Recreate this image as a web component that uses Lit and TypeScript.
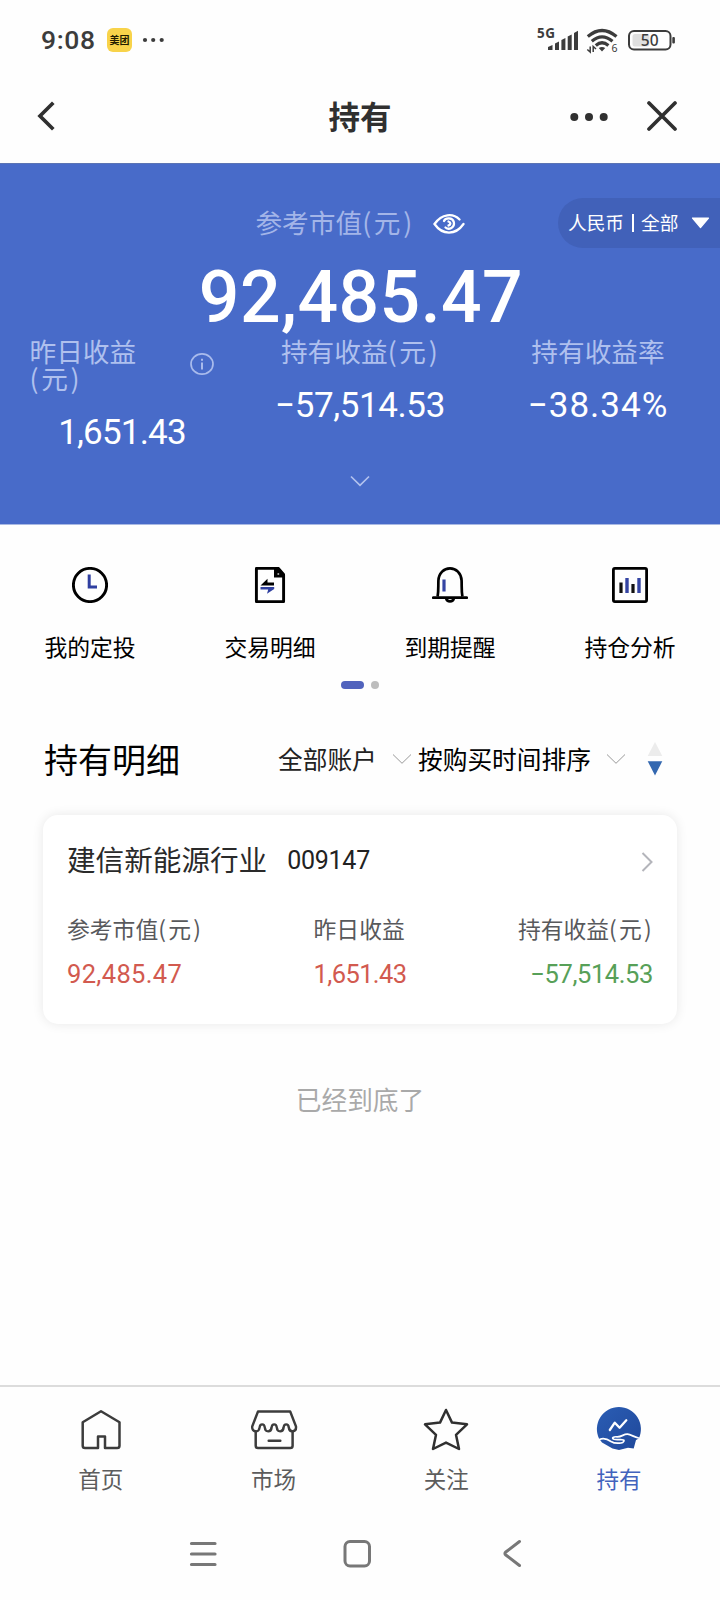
import { LitElement, html, css, svg } from "lit";
import { customElement } from "lit/decorators.js";

const icons = {
  clock: svg`<circle cx="18" cy="18" r="16.6" fill="none" stroke="#000" stroke-width="2.9"/><path d="M17.2 7.5V20H25" fill="none" stroke="#2f3fa0" stroke-width="3"/>`,
  doc: svg`<path d="M5 1.4H23.4L28.6 7.4V34.6H1.4V1.4Z" transform="translate(3 0)" fill="none" stroke="#000" stroke-width="2.9" stroke-linejoin="round"/><path d="M22 1.500V10.500H32.500V8L26 1.500Z" fill="#000"/><circle cx="26.300" cy="7" r="1" fill="#aaa"/><path d="M8.500 18.500L15.500 11.700V15.600H22V18.500Z" fill="#000"/><path d="M22.200 19.900H8.500V22.600H16.200L15 26.800L22.200 22Z" fill="#2f3fa0"/>`,
  bell: svg`<path d="M5.600 29.500C6.600 24 6.200 20 6.400 13.500C6.800 6 12 1.400 18 1.400S29.200 6 29.600 13.500C29.800 20 29.400 24 30.400 29.500" fill="none" stroke="#000" stroke-width="2.700"/><path d="M1.300 30.700H34.700" stroke="#000" stroke-width="2.700" stroke-linecap="round"/><path d="M14.200 31.500A3.900 3.700 0 0 0 21.800 31.500" fill="none" stroke="#000" stroke-width="2.800"/><path d="M12 12.500V24.500" stroke="#3545a3" stroke-width="3.200"/>`,
  chart: svg`<rect x="1.400" y="1.400" width="33.200" height="33.200" rx="1.500" fill="none" stroke="#000" stroke-width="2.800"/><path d="M9 15.500V26M21 17V26" stroke="#111" stroke-width="3.200"/><path d="M15 11V26M27 11V26" stroke="#3545a3" stroke-width="3.400"/>`,
  home: svg`<path d="M21 43H8Q5.700 43 5.700 40.700V17.200L24 6.200L42.500 17.200V40.700Q42.500 43 40.200 43H28V31.500H21Z" fill="none" stroke="#3c3c3c" stroke-width="2.500" stroke-linejoin="round"/>`,
  market: svg`<path d="M8 6.500H40.200L46 21.500C46.600 27.500 39.500 28 38.800 22.500C38.300 18.300 34 18.300 33.600 22.500C33 27.600 27.300 27.600 26.800 22.500C26.300 18.300 22 18.300 21.600 22.500C21 27.600 15.300 27.600 14.800 22.500C14.300 18.300 10 18.300 9.600 22.500C9 28 1.500 27.500 2.200 21.500Z" fill="none" stroke="#3c3c3c" stroke-width="2.400" stroke-linejoin="round"/><path d="M5.700 26.500V40.700Q5.700 43 8 43H40.300Q42.600 43 42.600 40.700V26.500M18.700 35.700H30.300" fill="none" stroke="#3c3c3c" stroke-width="2.500" stroke-linecap="round"/>`,
  star: svg`<path d="M24 5L30 17.600L45 19.300L34 29.800L37 44L24 37.600L11 44L14 29.800L3 19.300L18 17.600Z" fill="none" stroke="#303030" stroke-width="2.500" stroke-linejoin="round"/>`,
  hold: svg`<defs><linearGradient id="g" x1="0" x2="1" y1="0" y2="1"><stop offset="0" stop-color="#2a5db4"/><stop offset="1" stop-color="#20489a"/></linearGradient></defs><path d="M4 33.500A22 22 0 1 1 43.800 33.500L41 35L38.700 43.500L33 42.800L24 45L17.500 43.500L7 37.500Z" fill="url(#g)"/><path d="M4.500 34.500C8 33 12 33.800 16 36.500C20 39 29.500 38.800 29 35.500C28.500 33.500 22 35.500 19 34.300C16 33 18.500 31.500 22 31.800C27 32 28.500 28.900 32.500 29.200C36 29.500 38.500 31.800 43.500 33" fill="none" stroke="#fff" stroke-width="1.700" stroke-linecap="round"/><path d="M14.800 25L19.800 17.700L24.600 22.700L31.300 15.300" fill="none" stroke="#fff" stroke-width="2.300" stroke-linecap="round" stroke-linejoin="round"/>`,
};

const chevron = (cls: string, stroke: string, width: number) => html`<svg class=${cls} width="20" height="12" viewBox="0 0 20 12"><path d="M1 1.500L10 10.300L19 1.500" fill="none" stroke=${stroke} stroke-width=${width}/></svg>`;

const yuan = html`<span class="yuan">(元)</span>`;

@customElement("app-root")
export class AppRoot extends LitElement {
  static styles = css`
    :host { display: block; width: 720px; height: 1600px; background: #fefefe; font-family: "Noto Sans CJK SC", sans-serif; overflow: hidden; color: #000; }
    * { box-sizing: border-box; }
    svg { display: block; flex: none; }
    .page { display: flex; flex-direction: column; height: 1600px; white-space: nowrap; }
    .num { font-family: Roboto, "Noto Sans CJK SC", sans-serif; }
    .yuan { letter-spacing: .1em; margin-right: -.05em; }
    .status { height: 80px; display: flex; align-items: center; padding: 0 45px 0 41px; color: #3c3c3c; }
    .time { font: 500 26.500px/30px Roboto, sans-serif; letter-spacing: .6px; width: 66px; }
    .badge { width: 25px; height: 24px; border-radius: 6px; background: #f8d34a; color: #221c00; font-size: 10px; font-weight: 700; line-height: 24px; text-align: center; }
    .more { margin-left: 10px; }
    .signals { margin-left: auto; display: flex; align-items: center; }
    .nav { height: 83px; display: grid; grid-template-columns: 1fr auto 1fr; align-items: center; padding: 0 43px 11px 37px; }
    .title { font-size: 31.500px; font-weight: 700; line-height: 44px; color: #303030; padding: 0 0 2px 6px; }
    .actions { justify-self: end; display: flex; align-items: center; gap: 39px; }
    .hero { height: 362px; background: #486bc9; border-top: 1px solid #5b74b4; border-bottom: 1px solid #a9b9e3; color: #fff; display: flex; flex-direction: column; }
    .top { margin-top: 34px; height: 50px; display: grid; grid-template-columns: 1fr auto 1fr; align-items: center; }
    .worth { grid-column: 2; display: flex; align-items: center; gap: 19px; color: #a3b5e8; font-size: 26.700px; line-height: 44px; }
    .worth > span { padding-bottom: 2px; }
    .worth svg { margin-top: 2px; }
    .pill { justify-self: end; width: 162px; height: 50px; border-radius: 25px 0 0 25px; background: #4161b9; display: flex; align-items: center; padding-left: 10px; font-size: 18.700px; }
    .pill span { padding-bottom: 3px; }
    .sep { width: 2px; height: 18px; background: #fff; margin: 0 7.500px; }
    .tri { margin-left: 13px; }
    .total { margin-top: 9px; height: 81px; line-height: 81px; font-size: 71.500px; font-weight: 500; text-align: center; letter-spacing: .45px; padding-left: 2px; }
    .metrics { display: grid; grid-template-columns: 185px 292px 184px; padding: 0 29px 0 29px; height: 120px; }
    .metric { display: flex; flex-direction: column; align-items: center; }
    .mlabel { font-size: 26.700px; line-height: 27px; color: #afc0ee; display: flex; align-items: center; margin-top: -1px; }
    .mlabel.split { width: 184px; justify-content: space-between; }
    .mlabel.split > span { display: flex; flex-direction: column; }
    .mval { margin-top: 19px; font-size: 35px; line-height: 46px; }
    .m1 { letter-spacing: -.8px; padding-left: 1px; }
    .m2 { letter-spacing: -.4px; }
    .m3 { letter-spacing: 1px; }
    .fold { margin: 17px auto 0; }
    .quick { display: grid; grid-template-columns: repeat(4, 180px); margin-top: auto; padding-top: 42px; }
    .hero + .quick { margin-top: 0; }
    .qitem { display: flex; flex-direction: column; align-items: center; gap: 27px; font-size: 22.800px; line-height: 34px; }
    .dots { display: flex; justify-content: center; gap: 7px; margin-top: 17px; height: 8px; }
    .dots i { width: 8px; height: 8px; border-radius: 4px; background: #bdbdbd; }
    .dots i.on { width: 23px; background: #5163bd; }
    .head { margin-top: 40px; height: 60px; display: flex; align-items: center; padding-left: 44px; font-size: 24.700px; }
    .head span { padding-bottom: 3px; }
    .h { font-size: 34px; line-height: 50px; width: 234px; }
    .head .h { padding-bottom: 1px; }
    .acct { color: #222; width: 114px; }
    .sort { margin-left: 6px; width: 188px; }
    .updown { margin-left: 20.500px; }
    .card { margin: 26px 43px 0; height: 209px; border-radius: 15px; background: #fff; box-shadow: 0 0 12px rgba(0,0,0,.09); padding: 21px 24px 0 24px; }
    .fund { display: flex; align-items: center; height: 44px; font-size: 28.600px; color: #2a2a2a; }
    .code { margin-left: 20px; padding-top: 4px; font-size: 25px; color: #222; letter-spacing: -.25px; }
    .go { margin: 8px 0 0 auto; }
    .vals { margin-top: 32px; display: flex; justify-content: space-between; }
    .val { display: flex; flex-direction: column; align-items: flex-start; font-size: 22.800px; line-height: 34px; color: #58595c; }
    .val:last-child { align-items: flex-end; }
    .val .num { margin-top: 11px; font-size: 25.500px; color: #d25a4f; }
    .val .v1 { letter-spacing: .35px; }
    .val .v2 { letter-spacing: -.6px; }
    .val .v3 { letter-spacing: -.4px; color: #57a058; }
    .end { margin-top: 53px; text-align: center; font-size: 25.700px; line-height: 44px; color: #a9a9a9; }
    .tabs { margin-top: auto; height: 111px; border-top: 2px solid #dcdcdc; display: grid; grid-template-columns: repeat(4, 172.700px); padding: 18px 0 0 14.500px; }
    .tab { display: flex; flex-direction: column; align-items: center; gap: 8px; font-size: 22.500px; line-height: 34px; color: #5c5c5c; }
    .tab.on { color: #4263bd; }
    .sys { height: 104px; display: flex; align-items: center; gap: 125px; padding: 12px 0 0 189px; }
  `;

  private quick = [["clock", "我的定投"], ["doc", "交易明细"], ["bell", "到期提醒"], ["chart", "持仓分析"]] as const;
  private tabs = [["home", "首页"], ["market", "市场"], ["star", "关注"], ["hold", "持有"]] as const;

  render() {
    return html`<div class="page">
      <div class="status">
        <span class="time">9:08</span><span class="badge">美团</span>
        <svg class="more" width="24" height="6" viewBox="0 0 24 6" fill="#3c3c3c"><circle cx="3" cy="3" r="2.100"/><circle cx="11.200" cy="3" r="2.100"/><circle cx="19.700" cy="3" r="2.100"/></svg>
        <div class="signals">
          <svg width="138" height="30" viewBox="537 25 138 30">
            <text x="537" y="38" font-family="Noto Sans, sans-serif" font-size="13.500" font-weight="700" letter-spacing=".6" fill="#3c3c3c">5G</text>
            <g fill="#3c3c3c"><path d="M548 50V47L552.500 45V50ZM555 50V43.500L559 41.500V50ZM561.400 50V40L565.400 38V50ZM567.700 50V36.500L571.700 34.500V50ZM574 50V33L578 30.800V50Z"/><path d="M602 51.500L598.800 48Q602 46 605.200 48Z"/></g>
            <g fill="none" stroke="#3c3c3c" stroke-width="3.200"><path d="M587.800 36.500Q602 24.500 616.500 36.500M591.800 41.300Q602 32.600 612.500 41.300M595.800 45.500Q602 40 608.400 45.500"/></g>
            <path d="M590.200 46.500V52L587.300 49.500M593.200 52V46.500L596 49" fill="none" stroke="#3c3c3c" stroke-width="1.500"/>
            <text x="611.500" y="52.200" font-family="Noto Sans, sans-serif" font-size="10.500" fill="#3c3c3c">6</text>
            <rect x="629" y="31" width="41.500" height="18.500" rx="5" fill="#fefefe" stroke="#3c3c3c" stroke-width="2"/><rect x="632.500" y="34" width="17" height="12.500" rx="2.500" fill="#dfdfdf"/>
            <rect x="672.300" y="37" width="2.600" height="6.500" rx="1" fill="#3c3c3c"/>
            <text x="649.700" y="45.900" text-anchor="middle" font-family="Noto Sans, sans-serif" font-size="15.500" font-weight="500" fill="#3c3c3c">50</text>
          </svg>
        </div>
      </div>
      <div class="nav">
        <svg width="19" height="30" viewBox="0 0 19 30"><path d="M16.300 1.800L3 15L16.300 28.200" fill="none" stroke="#303030" stroke-width="3.700"/></svg>
        <span class="title">持有</span>
        <div class="actions">
          <svg width="38" height="10" viewBox="0 0 38 10" fill="#303030"><circle cx="4.300" cy="6" r="4"/><circle cx="19" cy="6" r="4"/><circle cx="33.700" cy="6" r="4"/></svg>
          <svg width="30" height="30" viewBox="0 0 30 30"><path d="M2 2L28 28M28 2L2 28" stroke="#303030" stroke-width="3.700" stroke-linecap="round"/></svg>
        </div>
      </div>
      <div class="hero">
        <div class="top">
          <div class="worth"><span>参考市值${yuan}</span>
            <svg width="32" height="22" viewBox="0 0 32 22" fill="none" stroke="#fff" stroke-width="2.300" stroke-linecap="round"><path d="M26.500 6.500C20 0 9 .5 1.500 11C9.500 22.500 22.500 22.500 30.500 11"/><path d="M11 8C12.500 4.500 19.500 4.300 20.800 9C22 14.500 16 17.500 12.500 14.500M15.500 8.500C18 9.300 18 12 15.500 12.500"/></svg>
          </div>
          <div class="pill"><span>人民币</span><i class="sep"></i><span>全部</span><svg class="tri" width="19" height="12" viewBox="0 0 19 12"><path d="M1.500 1H17.500L9.500 10.500Z" fill="#fff" stroke="#fff" stroke-width="1.200" stroke-linejoin="round"/></svg></div>
        </div>
        <div class="total num">92,485.47</div>
        <div class="metrics">
          <div class="metric"><div class="mlabel split"><span><span>昨日收益</span>${yuan}</span>
            <svg width="24" height="24" viewBox="0 0 24 24" fill="none" stroke="#a9bbec"><ellipse cx="12" cy="12" rx="11" ry="10.200" stroke-width="1.700"/><path d="M12 10.500V17.500M12 6.700V8.700" stroke-width="2"/></svg></div>
            <div class="mval m1 num">1,651.43</div></div>
          <div class="metric"><div class="mlabel">持有收益${yuan}</div><div class="mval m2 num">−57,514.53</div></div>
          <div class="metric"><div class="mlabel">持有收益率</div><div class="mval m3 num">−38.34%</div></div>
        </div>
        ${chevron("fold", "#b3c2ee", 1.700)}
      </div>
      <div class="quick">${this.quick.map(([k, t]) => html`<div class="qitem"><svg width="36" height="36" viewBox="0 0 36 36">${icons[k]}</svg><span>${t}</span></div>`)}</div>
      <div class="dots"><i class="on"></i><i></i></div>
      <div class="head"><span class="h">持有明细</span><span class="acct">全部账户</span>${chevron("", "#999", 1)}<span class="sort">按购买时间排序</span>${chevron("", "#999", 1)}
        <svg class="updown" width="16" height="34" viewBox="0 0 16 34"><path d="M8 0L15.300 14H.7Z" fill="#ececec"/><path d="M.7 19.200H15.300L8 33.500Z" fill="#3468b0"/></svg></div>
      <div class="card">
        <div class="fund"><span>建信新能源行业</span><span class="code num">009147</span><svg class="go" width="12" height="20" viewBox="0 0 12 20"><path d="M1.500 1L10.500 10L1.500 19" fill="none" stroke="#b4b5bb" stroke-width="2"/></svg></div>
        <div class="vals">
          <div class="val"><span>参考市值${yuan}</span><span class="num v1">92,485.47</span></div>
          <div class="val"><span>昨日收益</span><span class="num v2">1,651.43</span></div>
          <div class="val"><span>持有收益${yuan}</span><span class="num v3">−57,514.53</span></div>
        </div>
      </div>
      <div class="end">已经到底了</div>
      <div class="tabs">${this.tabs.map(([k, t]) => html`<div class="tab ${k === "hold" ? "on" : ""}"><svg width="48" height="48" viewBox="0 0 48 48">${icons[k]}</svg><span>${t}</span></div>`)}</div>
      <div class="sys">
        <svg width="28" height="28" viewBox="0 0 28 28"><path d="M2.500 3.500H26M2.500 14H26M2.500 24.500H26" stroke="#777" stroke-width="3.200" stroke-linecap="round"/></svg>
        <svg width="30" height="30" viewBox="0 0 30 30"><rect x="3" y="2.500" width="24.500" height="24.500" rx="5" fill="none" stroke="#777" stroke-width="3"/></svg>
        <svg width="30" height="30" viewBox="0 0 30 30"><path d="M22.500 2.500L8.800 13Q7 14.500 8.800 16L22.500 26.500" fill="none" stroke="#777" stroke-width="3" stroke-linecap="round"/></svg>
      </div>
    </div>`;
  }
}
